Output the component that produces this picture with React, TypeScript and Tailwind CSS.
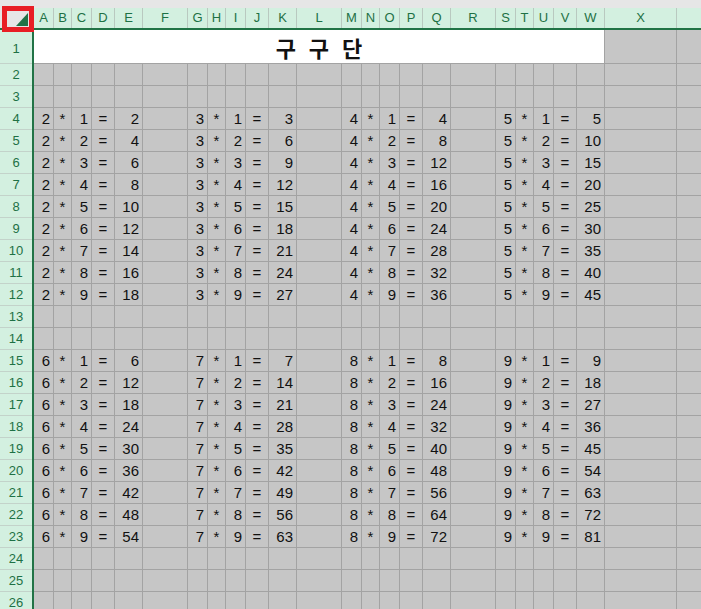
const blockWidths = ["w-[20px]", "w-[18px]", "w-[20px]", "w-[23px]", "w-[28px]", "w-[45px]"];

// A..W then X, and the partly visible column after it
const columns: { label: string; w: string }[] = [];
const letters = "ABCDEFGHIJKLMNOPQRSTUVW".split("");
letters.forEach((l, i) => columns.push({ label: l, w: blockWidths[i % 6] }));
columns.push({ label: "X", w: "w-[72px]" });
columns.push({ label: "", w: "w-[100px]" });

const dans = [
  [2, 3, 4, 5],
  [6, 7, 8, 9],
];

function cellText(row: number, col: number): { text: string; align: string } {
  // rows 4-12 -> first group, 15-23 -> second group
  let group = -1;
  let i = 0;
  if (row >= 4 && row <= 12) {
    group = 0;
    i = row - 3;
  } else if (row >= 15 && row <= 23) {
    group = 1;
    i = row - 14;
  }
  if (group < 0 || col > 22) return { text: "", align: "justify-end" };
  const block = Math.floor(col / 6);
  const pos = col % 6;
  const dan = dans[group][block];
  switch (pos) {
    case 0:
      return { text: String(dan), align: "justify-end" };
    case 1:
      return { text: "*", align: "justify-center" };
    case 2:
      return { text: String(i), align: "justify-end" };
    case 3:
      return { text: "=", align: "justify-center" };
    case 4:
      return { text: String(dan * i), align: "justify-end" };
    default:
      return { text: "", align: "justify-end" };
  }
}

const rows = Array.from({ length: 25 }, (_, k) => k + 2);

export default function App() {
  return (
    <div className="relative w-[701px] h-[609px] overflow-hidden bg-[#e6e6e6] font-['Liberation_Sans',Arial,sans-serif]">
      {/* top strip */}
      <div className="h-[8px] bg-[#e6e6e6]" />

      {/* column headers */}
      <div className="flex h-[20px]">
        <div className="w-[34px] shrink-0 bg-[#e6e6e6]" />
        {columns.map((c, i) => (
          <div
            key={i}
            className={`${c.w} shrink-0 flex items-center justify-center border-r border-[#b9c9c0] bg-[#d3f0e0] text-[13px] text-[#1e7145]`}
          >
            {c.label}
          </div>
        ))}
      </div>
      <div className="h-[2px] bg-[#217346]" />

      <div className="flex">
        {/* row headers */}
        <div className="w-[32px] shrink-0 bg-[#d3f0e0] text-[13px] text-[#1e7145]">
          <div className="h-[34px] flex items-end justify-center pb-[5px] border-b border-[#c3d3ca]">1</div>
          {rows.map((r) => (
            <div key={r} className="h-[22px] flex items-center justify-center border-b border-[#c3d3ca]">
              {r}
            </div>
          ))}
        </div>
        <div className="w-[2px] shrink-0 bg-[#217346]" />

        {/* sheet */}
        <div className="flex-1 bg-[#c6c6c6] text-[15px] text-[#111]">
          <div className="flex h-[34px]">
            <div className="w-[571px] shrink-0 flex items-center justify-center bg-white border-r border-b border-[#a3a3a3] font-['Noto_Sans_CJK_KR',sans-serif] font-bold text-[22px] leading-none tracking-[4px] pl-[4px]">
              구 구 단
            </div>
            <div className="w-[72px] shrink-0 border-r border-b border-[#a3a3a3]" />
            <div className="w-[100px] shrink-0 border-r border-b border-[#a3a3a3]" />
          </div>
          {rows.map((r) => (
            <div key={r} className="flex h-[22px]">
              {columns.map((c, ci) => {
                const t = cellText(r, ci);
                return (
                  <div
                    key={ci}
                    className={`${c.w} shrink-0 flex items-center ${t.align} ${
                      t.align === "justify-end" ? "pr-[3px]" : ""
                    } border-r border-b border-[#a3a3a3] leading-none`}
                  >
                    {t.text}
                  </div>
                );
              })}
            </div>
          ))}
        </div>
      </div>

      {/* select-all corner */}
      <div className="absolute left-[2px] top-[6px] w-[32px] h-[26px] border-[5px] border-[#e81e25] bg-[#e6e6e6]">
        <svg width="22" height="16" viewBox="0 0 22 16" className="block">
          <polygon points="9,15 21,2 21,15" fill="#217346" />
        </svg>
      </div>
    </div>
  );
}
